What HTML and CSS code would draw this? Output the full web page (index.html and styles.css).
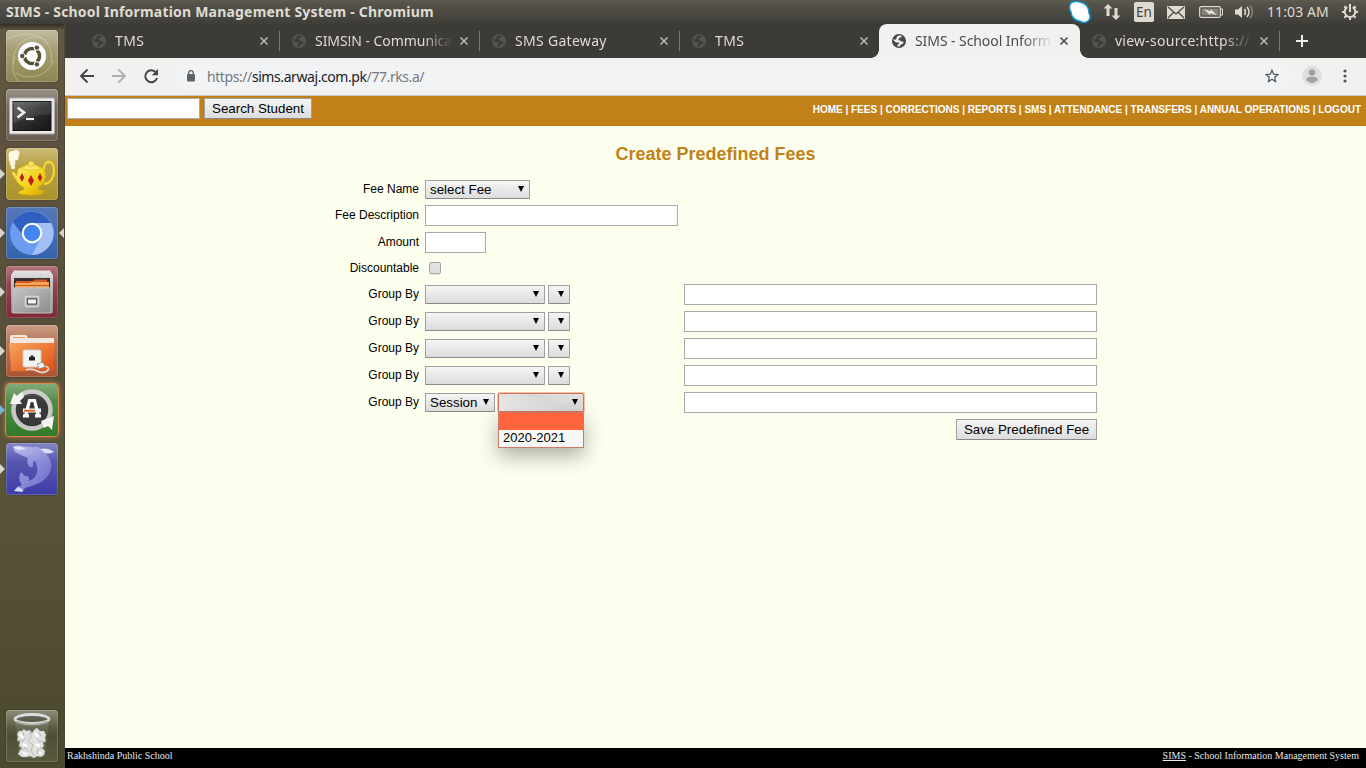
FILE: index.html
```
<!DOCTYPE html>
<html lang="en">
<head>
<meta charset="utf-8">
<title>SIMS - School Information Management System</title>
<link rel="stylesheet" href="styles.css">
</head>
<body>
<svg width="0" height="0" class="defs">
  <defs>
    <symbol id="globe" viewBox="0 0 14 14"><circle cx="7" cy="7" r="7" fill="currentColor"/><path d="M5.2 2.2 8 1.2 10 2.2 8.5 3.6 7 4 6.7 5.4 5.2 6.2H8l1 1.4 2.8.2-1 2.2-2 .6L7.600 12.500 5.500 12.500 5.500 10.500 7.300 9.900 7 8.700 3.600 8.200 1.400 6.100 1.600 5.200 4 5.700Z" fill="var(--tabbg)"/></symbol>
    <symbol id="x" viewBox="0 0 10 10"><path d="M1.500 1.500 8.500 8.500M8.500 1.500 1.500 8.500" fill="none" stroke="currentColor" stroke-width="1.600"/></symbol>
    <linearGradient id="metal" x2="0" y2="1"><stop stop-color="#dedede"/><stop offset="1" stop-color="#858585"/></linearGradient>
    <linearGradient id="front" x2="1" y2="1"><stop stop-color="#c4c4c4"/><stop offset="1" stop-color="#8c8c8c"/></linearGradient>
    <linearGradient id="screen" x2="1" y2="1"><stop stop-color="#5c5c5c"/><stop offset=".5" stop-color="#2c2c2c"/><stop offset="1" stop-color="#151515"/></linearGradient>
    <linearGradient id="gold" x2="1" y2="1"><stop stop-color="#fff27a"/><stop offset=".55" stop-color="#f4d51c"/><stop offset="1" stop-color="#d6a800"/></linearGradient>
    <linearGradient id="folder" x2="1" y2="1"><stop stop-color="#f8a45e"/><stop offset="1" stop-color="#e04e10"/></linearGradient>
    <linearGradient id="dolphin" x2="1" y2="1"><stop stop-color="#b9bcf0"/><stop offset=".5" stop-color="#9192de"/><stop offset="1" stop-color="#6b68c8"/></linearGradient>
  </defs>
</svg>

<header class="panel">
  <div class="panel-title">SIMS - School Information Management System - Chromium</div>
  <div class="indicators">
    <svg class="i-skype" width="22" height="23" viewBox="0 0 22 23"><path d="M2 2C6-1 11 1 14 2c5 2 6 6 6 10 2 3 1 7-1 8-3 3-7 1-9 0-5-1-8-5-8-9C0 8 0 4 2 2Z" fill="#fff" stroke="#1593d2" stroke-width="1.600"/></svg>
    <svg class="i-net" width="18" height="16" viewBox="0 0 18 16"><path d="M5 0 9.500 4.500H6.500V12H3.500V4.500H.5ZM13 16 8.500 11.500H11.500V4H14.500V11.500H17.500Z" fill="#dfdbd2"/></svg>
    <span class="i-lang">En</span>
    <svg class="i-mail" width="18" height="13" viewBox="0 0 18 13"><path d="M0 0H18V13H0Z" fill="#dfdbd2"/><path d="M1 1 9 8 17 1M1 12 6.500 6.500M17 12 11.500 6.500" fill="none" stroke="#494740" stroke-width="1.200"/></svg>
    <svg class="i-bat" width="24" height="12" viewBox="0 0 24 12"><rect x=".7" y=".7" width="20.600" height="10.600" rx="1.500" fill="none" stroke="#dfdbd2" stroke-width="1.300"/><path d="M2.500 2.500H19.500V9.500H2.500Z" fill="#858279"/><path d="M22 3h1.500v6H22" stroke="#dfdbd2" fill="none"/><path d="M5 3 11.500 5.600 11.500 3 18 9.300 11.500 7 11 9Z" fill="#eeebe4"/></svg>
    <svg class="i-vol" width="20" height="16" viewBox="0 0 20 16"><path d="M0 5.500H3L7 2V14L3 10.500H0Z" fill="#dfdbd2"/><path d="M9.500 5q2 3 0 6M12 3q4 5 0 10" fill="none" stroke="#dfdbd2" stroke-width="1.500"/><path d="M15 1.500q5 6.500 0 13" fill="none" stroke="#87847b" stroke-width="1.500"/></svg>
    <span class="clock">11:03 AM</span>
    <svg class="i-gear" width="16" height="16" viewBox="0 0 16 16"><path d="M5.300 3.200A5.300 5.300 0 1 0 10.700 3.200" fill="none" stroke="#dfdbd2" stroke-width="2"/><path d="M8 0V8M0 8H2.500M13.500 8H16M2.300 2.300 4 4M13.700 2.300 12 4M2.300 13.700 4 12M13.700 13.700 12 12M8 13.500V16" stroke="#dfdbd2" stroke-width="2"/></svg>
  </div>
</header>

<div class="desktop">
  <nav class="launcher">
    <div class="tile t-dash"><svg viewBox="0 0 52 52"><g fill="none" stroke="#d5d1ad" stroke-opacity=".55"><path d="M7 35C6 19 16 8 29 7S47 20 45 33M1 10C12 2 34 1 42 15M12 51C6 44 6 34 9 26M10 43C23 51 41 47 48 30"/></g><circle cx="26" cy="26" r="14" fill="#fff"/><circle cx="26" cy="26" r="7.500" fill="none" stroke="#55523a" stroke-width="3.600"/><path d="M26 26 17 26M26 26 30.500 18.200M26 26 30.500 33.800" stroke="#fff" stroke-width="2"/><circle cx="26" cy="26" r="5.500" fill="#fff"/><g fill="#55523a" stroke="#fff"><circle cx="16.300" cy="26" r="2.700"/><circle cx="30.900" cy="17.600" r="2.700"/><circle cx="30.900" cy="34.400" r="2.700"/></g></svg></div>
    <div class="tile t-term"><svg viewBox="0 0 52 52"><rect x="3.500" y="9" width="45" height="36" rx="1" fill="#e8e8e8" stroke="#aaa"/><rect x="7" y="12.500" width="38" height="29" fill="url(#screen)" stroke="#111"/><path d="M7 13H45V25Q24 26 7 34Z" fill="#fff" opacity=".1"/><path d="M11.500 18.500 18 23.500 11.500 28.500" fill="none" stroke="#eee" stroke-width="2.700"/><path d="M20 30H28" stroke="#eee" stroke-width="2.200"/></svg></div>
    <div class="tile t-tea run"><svg viewBox="0 0 52 52"><g fill="#fbf7e2"><circle cx="6.500" cy="7" r="4"/><circle cx="10" cy="5.500" r="3.500"/><circle cx="6" cy="11" r="3.200"/><circle cx="9.500" cy="9.500" r="3"/><circle cx="6.500" cy="15" r="2.900"/><circle cx="7" cy="19" r="2.200"/></g><path d="M38 21C38 11 48 12 48 22 48 31 43 36 38 36" fill="none" stroke="#f3d530" stroke-width="2.300"/><path d="M5 24Q9 23 10.500 28L12 21Q25 12 38 21C42 29 38 37 32 39.500Q31 42 37 43Q39 45 34 46 25 48.500 14 46 11 45 14 43 19 42 18 39.500C11 37 9 29 5 24Z" fill="url(#gold)" stroke="#d8ae12" stroke-width=".8"/><path d="M15 20.500Q25 12 35 20.500Q25 24 15 20.500Z" fill="#f8e76a" stroke="#dfba22" stroke-width=".7"/><circle cx="25" cy="16" r="2.800" fill="#fbe65a" stroke="#d3ad19" stroke-width=".6"/><path d="M16 25 18.300 29.500 16 34 13.700 29.500ZM25 27 28 32.500 25 38 22 32.500ZM34 25 36.300 29.500 34 34 31.700 29.500Z" fill="#c11f1f"/></svg></div>
    <div class="tile t-chr run cur"><svg viewBox="0 0 52 52"><circle cx="26" cy="26" r="22" fill="#6b9cf1"/><path d="M7 15A22 22 0 0 1 45 16H26L16 27Z" fill="#315fc1"/><path d="M45 16A22 22 0 0 1 26 48L35 31 34 19 26 16Z" fill="#a3c0f6"/><circle cx="26" cy="26" r="10.300" fill="#fff"/><circle cx="26" cy="26" r="8.200" fill="#4285ee"/></svg></div>
    <div class="tile t-cab run"><svg viewBox="0 0 52 52"><path d="M8 4.500H44L47 9V47H5V9Z" fill="url(#metal)"/><path d="M8 12H44V24H8Z" fill="#302521"/><path d="M10 15H27L29 13.500H41V18H10Z" fill="#cf551d"/><path d="M9 17H24L26 16H43V23H9Z" fill="#f3a357"/><path d="M9 19.500H43" stroke="#c55b1c"/><path d="M7 22H45V47H7Z" fill="url(#front)" stroke="#c2c2c2"/><rect x="19.500" y="30.500" width="13" height="10" rx="1.500" fill="#9b9b9b" stroke="#dadada" stroke-width="1.500"/><rect x="21.500" y="33" width="9" height="5" fill="#f4f4f4" stroke="#555"/></svg></div>
    <div class="tile t-net run"><svg viewBox="0 0 52 52"><path d="M4 17V12Q4 10 6 10H20L22 13H48V20H4Z" fill="#f4e6df"/><path d="M7 12.500H19" stroke="#e68a5d"/><path d="M3 18H49L47 46H5Z" fill="url(#folder)"/><rect x="17" y="25" width="18" height="17" rx="1.500" fill="#f4f4f0" stroke="#ccc"/><path d="M23 35.500V32H24.500V30.500H27.500V32H29V35.500Z" fill="#222"/><path d="M20 45Q25 43 31 46T41 46 39 41" fill="none" stroke="#d9d9d9" stroke-width="1.800"/><path d="M31 39 37 37 39 42 33 44Z" fill="#eee" stroke="#888" stroke-width=".8"/></svg></div>
    <div class="tile t-upd run open"><svg viewBox="0 0 52 52"><circle cx="26" cy="26" r="18.500" fill="#393939" stroke="#c8c8c4" stroke-width="4.500"/><path d="M4 20 8 9 11 12 16 8 18 13 14 17 16 20Z" fill="#f4f4f0"/><path d="M35 37 48 32 46 46 42 42 38 44Z" fill="#f4f4f0"/><path d="M19.500 32 23.500 16.500H28.500L32.500 32M17 31.800H23M29 31.800H35" fill="none" stroke="#fff" stroke-width="3.200"/><path d="M17 26.500H35" stroke="#fff" stroke-width="4"/><path d="M18 26.700H29" stroke="#e8602c" stroke-width="2"/></svg></div>
    <div class="tile t-sql run"><svg viewBox="0 0 52 52"><path d="M7 4C12 1 22 5 29 4Q33 3 36 7Q42 5 48 9 44 11 40 11 47 18 45 26 42 37 31 41 26 43 19 45L17 48 8 48 11 44 16 42Q12 37 14 31 16 27 18 33 24 32 23 38C31 35 34 27 29 18Q28 17 27 20 28 25 24 24 20 20 22 15 15 12 9 9Z" fill="url(#dolphin)" opacity=".9"/><path d="M34 6Q42 4 48 9 44 11 39 10ZM8 48 12 44 16 46 17 49ZM7 4Q14 2 20 6L12 7Z" fill="#e6e8fb" opacity=".85"/></svg></div>
    <div class="tile t-trash"><svg viewBox="0 0 52 52"><path d="M9 9 13 46Q26 51 39 46L43 9Z" fill="#fff" fill-opacity=".1"/><path d="M11 24 13 21 16 21 18 19 20 21 24 20 26 23 29 19 31 18 34 21 38 21 40 25 39 28 40 31 37 33 38 36 36 38 39 41 38 45 35 47 31 46 28 48 24 46 20 47 16 47 12 44 14 40 16 38 13 36 14 32 11 30 12 27Z" fill="#e0e0de"/><path d="M24 21 25 27 22 31 27 35 25 40 28 46M11 30 17 31 20 27M40 31 34 32 31 28M14 40 20 38 23 42M36 38 31 40 32 44M17 22 18 26M33 22 35 26" fill="none" stroke="#b3b3b0" stroke-width=".9"/><path d="M14 24 17 28M29 23 32 27M17 34 21 36M29 34 34 36M17 43 21 44M33 43 36 43" stroke="#fff" stroke-width="2.200"/><ellipse cx="26" cy="9" rx="17" ry="4.500" fill="#4b4c3c" stroke="#d4d4d2" stroke-width="2.800"/><path d="M10 11.500Q26 18 42 11.500" fill="none" stroke="#a5a5a3" stroke-width="1.600"/></svg></div>
  </nav>

  <main class="browser">
    <div class="tabs">
      <div class="tab"><svg class="fav"><use href="#globe"/></svg><span>TMS</span><svg class="close"><use href="#x"/></svg></div>
      <div class="tab"><svg class="fav"><use href="#globe"/></svg><span class="t-long">SIMS!N - Communica</span><svg class="close"><use href="#x"/></svg></div>
      <div class="tab"><svg class="fav"><use href="#globe"/></svg><span class="t-sms">SMS Gateway</span><svg class="close"><use href="#x"/></svg></div>
      <div class="tab nosep"><svg class="fav"><use href="#globe"/></svg><span>TMS</span><svg class="close"><use href="#x"/></svg></div>
      <div class="tab active"><svg class="fav"><use href="#globe"/></svg><span class="t-act">SIMS - School Inform</span><svg class="close"><use href="#x"/></svg></div>
      <div class="tab last"><svg class="fav"><use href="#globe"/></svg><span class="t-src">view-source:https://</span><svg class="close"><use href="#x"/></svg></div>
      <svg class="plus" width="12" height="12" viewBox="0 0 12 12"><path d="M6 0V12M0 6H12" stroke="#efeee6" stroke-width="2"/></svg>
    </div>
    <div class="toolbar">
      <svg class="nav-i" width="16" height="16" viewBox="0 0 16 16"><path d="M15 8H2.500M8.500 1.500 2 8 8.500 14.500" fill="none" stroke="#454545" stroke-width="1.900"/></svg>
      <svg class="nav-i" width="16" height="16" viewBox="0 0 16 16"><path d="M1 8H13.500M7.500 1.500 14 8 7.500 14.500" fill="none" stroke="#b1b0ae" stroke-width="1.900"/></svg>
      <svg class="nav-i" width="16" height="16" viewBox="0 0 16 16"><path d="M13 4.500A6 6 0 1 0 14 10" fill="none" stroke="#454545" stroke-width="2"/><path d="M15 1V7.200H8.800Z" fill="#454545"/></svg>
      <div class="omni">
        <svg width="10" height="12" viewBox="0 0 10 12"><rect x="1" y="4" width="8" height="7.500" rx="1" fill="#5f6368"/><path d="M2.700 5V3a2.300 2.300 0 0 1 4.600 0V5" fill="none" stroke="#5f6368" stroke-width="1.300"/></svg>
        <div class="url">https://<b>sims.arwaj.com.pk</b>/77.rks.a/</div>
        <svg class="star" width="14" height="14" viewBox="0 0 14 14"><path d="M7 1.200 8.600 5.100 12.900 5.500 9.700 8.300 10.600 12.600 7 10.300 3.400 12.600 4.300 8.300 1.100 5.500 5.400 5.100Z" fill="none" stroke="#555b60" stroke-width="1.300"/></svg>
      </div>
      <svg class="user" width="20" height="20" viewBox="0 0 20 20"><circle cx="10" cy="10" r="10" fill="#dededf"/><circle cx="10" cy="6.500" r="3.200" fill="#a0a0a2"/><path d="M4.300 14C4.300 11 8 10.800 10 10.800S15.700 11 15.700 14Q13 17 10 17T4.300 14Z" fill="#a0a0a2"/></svg>
      <svg class="dots" width="4" height="14" viewBox="0 0 4 14"><g fill="#555"><circle cx="2" cy="2" r="1.600"/><circle cx="2" cy="7" r="1.600"/><circle cx="2" cy="12" r="1.600"/></g></svg>
    </div>

    <div class="page">
      <div class="banner">
        <div class="box search"></div>
        <div class="btn btn-search">Search Student</div>
        <div class="menu">HOME | FEES | CORRECTIONS | REPORTS | SMS | ATTENDANCE | TRANSFERS | ANNUAL OPERATIONS | LOGOUT</div>
      </div>
      <div class="content">
        <h1>Create Predefined Fees</h1>
        <div class="form">
          <div class="row r26"><label>Fee Name</label><div class="ctl"><div class="sel w105">select Fee</div></div></div>
          <div class="row"><label>Fee Description</label><div class="ctl"><div class="box w253"></div></div></div>
          <div class="row r26"><label>Amount</label><div class="ctl"><div class="box w61"></div></div></div>
          <div class="row r26"><label>Discountable</label><div class="ctl"><div class="check"></div></div></div>
          <div class="row"><label>Group By</label><div class="ctl"><div class="sel w120"></div><div class="sel w22"></div></div><div class="box w413"></div></div>
          <div class="row"><label>Group By</label><div class="ctl"><div class="sel w120"></div><div class="sel w22"></div></div><div class="box w413"></div></div>
          <div class="row"><label>Group By</label><div class="ctl"><div class="sel w120"></div><div class="sel w22"></div></div><div class="box w413"></div></div>
          <div class="row"><label>Group By</label><div class="ctl"><div class="sel w120"></div><div class="sel w22"></div></div><div class="box w413"></div></div>
          <div class="row"><label>Group By</label><div class="ctl"><div class="sel w70">Session</div><div class="sel w86 focus"><div class="drop"><div class="opt hot"></div><div class="opt">2020-2021</div></div></div></div><div class="box w413"></div></div>
          <div class="row end"><div class="btn btn-save">Save Predefined Fee</div></div>
        </div>
      </div>
      <footer class="foot"><span>Rakhshinda Public School</span><span><u>SIMS</u> - School Information Management System</span></footer>
    </div>
  </main>
</div>
</body>
</html>
```
FILE: styles.css
```
* { box-sizing: border-box; }
body { margin: 0; width: 1366px; height: 768px; overflow: hidden; display: flex; flex-direction: column; font-family: "Liberation Sans", Arial, sans-serif; }
svg { display: block; flex: none; }
.defs { position: absolute; }

.panel { height: 24px; flex: none; display: flex; align-items: center; justify-content: space-between; padding: 0 8px 0 6px; background: linear-gradient(#5f5d50, #55534a 15%, #3e3d38); color: #dfdbd2; font-family: "Noto Sans", sans-serif; }
.panel-title { font-size: 14px; font-weight: 700; letter-spacing: .2px; white-space: nowrap; line-height: 24px; }
.indicators { display: flex; align-items: center; height: 24px; }
.i-skype { margin-right: 12px; }
.i-net { margin-right: 13px; }
.i-lang { width: 20px; height: 20px; border-radius: 2px; background: #dfdbd2; color: #45443f; font-size: 13.500px; line-height: 20px; text-align: center; margin-right: 13px; }
.i-mail { margin-right: 14px; }
.i-bat { margin-right: 12px; }
.i-vol { margin-right: 12px; }
.clock { font-size: 14px; width: 63px; height: 24px; line-height: 23px; white-space: nowrap; letter-spacing: .1px; margin-right: 12px; }

.desktop { flex: 1; min-height: 0; display: flex; }
.launcher { width: 65px; flex: none; display: flex; flex-direction: column; gap: 7px; padding: 6px 0 6px 6px; background: linear-gradient(#302d24, #625842 6px, #5e523f 100px, #57503b 320px, #5a5539 450px, #4a482d 744px); border-right: 1px solid #504834; }
.tile { position: relative; width: 52px; height: 52px; flex: none; border-radius: 4px; box-shadow: inset 0 0 0 1px rgba(255,255,255,.18), 0 0 2px rgba(0,0,0,.4); }
.tile svg { width: 52px; height: 52px; }
.tile::after { content: ""; position: absolute; inset: 0; border-radius: 4px; background: linear-gradient(rgba(255,255,255,.2), transparent 35%); }
.t-dash { background: linear-gradient(#b1ac8a, #98915f 75%, #8b8556); }
.t-term { background: linear-gradient(#81786c, #71675a 50%, #6c6054); }
.t-tea { background: linear-gradient(#bea956, #ac9229); }
.t-chr { background: linear-gradient(#5778b9, #3563ac); }
.t-cab { background: linear-gradient(#a0525c, #7d2938); }
.t-net { background: linear-gradient(#be8568, #aa5533); }
.t-upd { background: linear-gradient(#629456, #327a2b); }
.t-sql { background: linear-gradient(#6568b6, #3c3ca5); }
.t-trash { margin-top: auto; background: linear-gradient(#706f55, #4e4e37 50%, #59593f); }
.run::before { content: ""; position: absolute; left: -6px; top: 21px; border: solid transparent; border-width: 5px 0 5px 5px; border-left-color: #d7d5cd; }
.cur::after { left: 53px; top: 21px; right: auto; bottom: auto; width: 0; height: 0; border-radius: 0; background: none; border: solid transparent; border-width: 5px 5px 5px 0; border-right-color: #d7d5cd; }
.open { box-shadow: 0 0 0 1px #d38b50, 0 0 5px 1px #c17339; }
.open::before { border-left-color: #74b5c8; }

.browser { flex: 1; min-width: 0; display: flex; flex-direction: column; }
.tabs { height: 34px; flex: none; display: flex; align-items: center; padding-left: 14px; background: #3c3b37; font-family: "Noto Sans", sans-serif; --tabbg: #3c3b37; }
.tab { position: relative; width: 200px; height: 34px; flex: none; display: flex; align-items: center; padding: 0 0 0 13px; color: #dfdbd2; }
.tab::before { content: ""; position: absolute; right: -1px; top: 7px; width: 1px; height: 20px; background: #7b7972; }
.nosep::before { display: none; }
.last { margin-left: -1px; }
.fav { width: 14px; height: 14px; color: #555451; margin-right: 9px; }
.tab span { width: 138px; height: 24px; line-height: 23px; font-size: 14px; white-space: nowrap; letter-spacing: .4px; -webkit-mask-image: linear-gradient(90deg, #000 108px, transparent 138px); mask-image: linear-gradient(90deg, #000 108px, transparent 138px); }
.tab .t-long { letter-spacing: -.05px; }
.tab .t-sms { letter-spacing: .3px; }
.tab .t-act { letter-spacing: -.08px; }
.tab .t-src { letter-spacing: .25px; }
.close { width: 10px; height: 10px; margin-left: 6px; color: #b9b7b0; }
.active { width: 201px; --tabbg: #f2f1f0; background: #f2f1f0; color: #4c4c4c; border-radius: 8px 8px 0 0; }
.active .fav, .active .close { color: #484848; }
.active::before { left: -8px; right: auto; top: 26px; width: 8px; height: 8px; background: radial-gradient(circle at 0 0, transparent 7.500px, #f2f1f0 8px); }
.active::after { content: ""; position: absolute; z-index: 1; left: 201px; top: 26px; width: 8px; height: 8px; background: radial-gradient(circle at 8px 0, transparent 7.500px, #f2f1f0 8px); }
.plus { margin-left: 17px; }
.toolbar { height: 38px; flex: none; display: flex; align-items: center; padding: 0 19px 1px 14px; background: #f2f1f0; border-bottom: 1px solid #c9c8c8; }
.nav-i { margin-right: 16px; }
.omni { width: 1116px; height: 28px; border-radius: 14px; background: #f1f3f4; display: flex; align-items: center; padding: 0 11px; margin-right: 12px; }
.url { flex: 1; margin-left: 11px; font: 14px/27px "Noto Sans", sans-serif; letter-spacing: -.42px; color: #757a7f; white-space: nowrap; }
.url b { font-weight: 400; color: #202124; }
.user { margin-right: 21px; }

.page { flex: 1; display: flex; flex-direction: column; background: #fdffee; }
.banner { height: 30px; flex: none; display: flex; padding: 2px 5px 0 2px; background: #c28118; }
.box { height: 21px; background: #fff; border: 1px solid #a9a9a9; flex: none; }
.search { width: 133px; margin-right: 4px; }
.btn { height: 21px; border: 1px solid #a0a0a0; border-bottom-color: #888; border-radius: 1px; background: linear-gradient(#f5f5f5, #dcdcdc); color: #000; font-size: 13.333px; line-height: 19px; text-align: center; white-space: nowrap; }
.btn-search { width: 108px; }
.menu { margin-left: auto; color: #fff; font-size: 10px; font-weight: 700; line-height: 23px; white-space: nowrap; }
.content { flex: 1; display: flex; flex-direction: column; }
h1 { margin: 17px 0 14px; font-size: 18px; line-height: 22px; text-align: center; color: #c28118; }
.form { width: 832px; margin-left: 200px; }
.row { height: 27px; display: flex; align-items: flex-start; }
.r26 { height: 26px; }
.row label { width: 154px; margin-right: 6px; text-align: right; font-size: 12px; line-height: 20px; color: #000; }
.ctl { width: 259px; height: 21px; display: flex; align-items: center; gap: 3px; }
.sel { position: relative; height: 19px; border: 1px solid #a0a0a0; border-bottom-color: #888; border-radius: 1px; background: linear-gradient(#f5f5f5, #dcdcdc); font-size: 13.333px; line-height: 17px; padding-left: 4px; color: #000; white-space: nowrap; }
.sel::after { content: ""; position: absolute; right: 5px; top: 5px; border: solid transparent; border-width: 6px 3px 0; border-top-color: #000; }
.w105 { width: 105px; } .w120 { width: 120px; } .w22 { width: 22px; } .w70 { width: 70px; } .w86 { width: 86px; }
.w253 { width: 253px; } .w61 { width: 61px; } .w413 { width: 413px; }
.check { width: 12px; height: 12px; margin: 0 0 1px 4px; border: 1px solid #a5a5a5; border-radius: 2px; background: linear-gradient(#e4e4e4, #dcdcdc); box-shadow: 0 1px 0 rgba(0,0,0,.08); }
.focus { border-color: #d6735b; box-shadow: 0 0 0 1px rgba(255,130,90,.5); background: linear-gradient(20deg, #eee, #d9d9d9 60%, #e2e2e2); }
.drop { position: absolute; z-index: 2; left: -1px; top: 18px; width: 86px; height: 36px; background: #f7f7f7; border: 1px solid #ce7a6a; box-shadow: 0 8px 20px rgba(0,0,0,.32); }
.opt { height: 17px; line-height: 16px; padding-left: 4px; font-size: 13px; }
.hot { background: #ff643c; }
.end { justify-content: flex-end; }
.btn-save { width: 141px; }
.foot { height: 20px; flex: none; display: flex; justify-content: space-between; padding: 0 7px 0 2px; background: #000; color: #e8e8e8; font: 10px/16px "Liberation Serif", serif; }
```
